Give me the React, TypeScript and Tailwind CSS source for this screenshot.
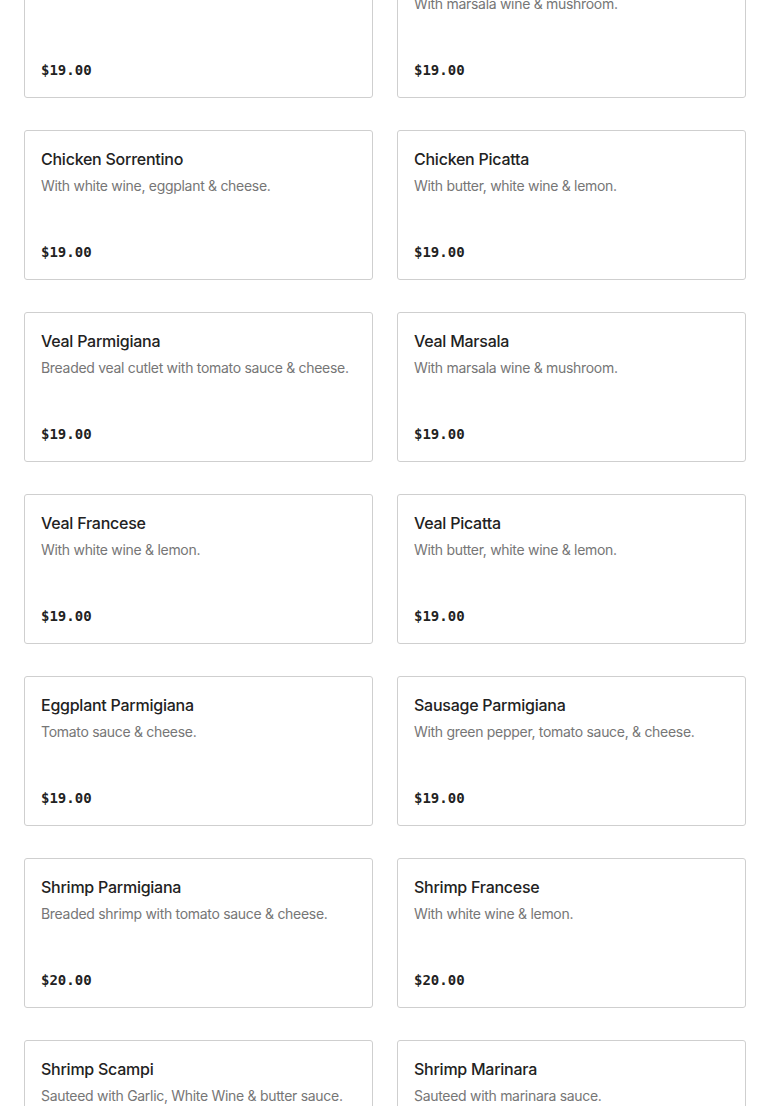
import React from "react";

interface MenuItem {
  name: string;
  description: string;
  price: string;
}

const items: MenuItem[] = [
  { name: "Chicken Francese", description: "", price: "$19.00" },
  { name: "Chicken Marsala", description: "With marsala wine & mushroom.", price: "$19.00" },
  { name: "Chicken Sorrentino", description: "With white wine, eggplant & cheese.", price: "$19.00" },
  { name: "Chicken Picatta", description: "With butter, white wine & lemon.", price: "$19.00" },
  { name: "Veal Parmigiana", description: "Breaded veal cutlet with tomato sauce & cheese.", price: "$19.00" },
  { name: "Veal Marsala", description: "With marsala wine & mushroom.", price: "$19.00" },
  { name: "Veal Francese", description: "With white wine & lemon.", price: "$19.00" },
  { name: "Veal Picatta", description: "With butter, white wine & lemon.", price: "$19.00" },
  { name: "Eggplant Parmigiana", description: "Tomato sauce & cheese.", price: "$19.00" },
  { name: "Sausage Parmigiana", description: "With green pepper, tomato sauce, & cheese.", price: "$19.00" },
  { name: "Shrimp Parmigiana", description: "Breaded shrimp with tomato sauce & cheese.", price: "$20.00" },
  { name: "Shrimp Francese", description: "With white wine & lemon.", price: "$20.00" },
  { name: "Shrimp Scampi", description: "Sauteed with Garlic, White Wine & butter sauce.", price: "$20.00" },
  { name: "Shrimp Marinara", description: "Sauteed with marinara sauce.", price: "$20.00" },
];

function MenuCard({ item }: { item: MenuItem }) {
  return (
    <div className="flex h-[150px] flex-col justify-between rounded-[3px] border border-[#cfcfcf] bg-white px-4 pt-4 pb-[17px]">
      <div>
        <h3 className="mb-[5px] text-[16px] font-medium leading-6 text-[#222222] font-['Inter',sans-serif] tracking-[-0.25px]">
          {item.name}
        </h3>
        {item.description && (
          <p className="whitespace-nowrap text-[14px] leading-5 text-[#767676] font-['Inter',sans-serif] tracking-[-0.3px]">
            {item.description}
          </p>
        )}
      </div>
      <div className="text-[14px] font-bold leading-5 text-[#222222] font-['DejaVu_Sans_Mono',monospace]">
        {item.price}
      </div>
    </div>
  );
}

export default function App() {
  return (
    <div className="h-[1106px] overflow-hidden bg-white">
      <div className="-mt-[52px] grid grid-cols-2 gap-x-6 gap-y-8 px-6">
        {items.map((item) => (
          <MenuCard key={item.name} item={item} />
        ))}
      </div>
    </div>
  );
}
